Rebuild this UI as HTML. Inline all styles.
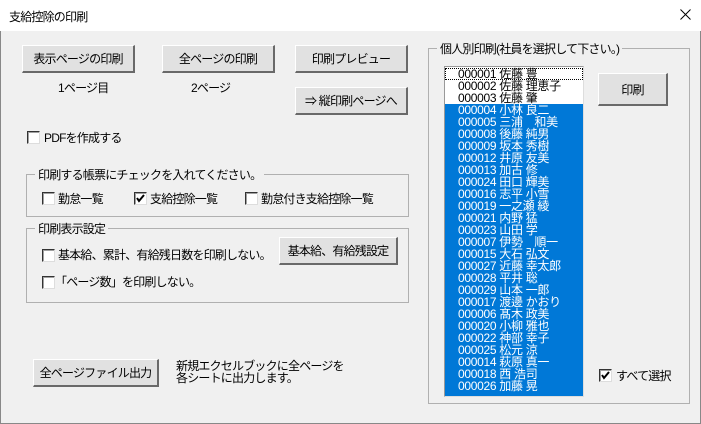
<!DOCTYPE html>
<html><head><meta charset="utf-8"><style>
*{margin:0;padding:0;box-sizing:border-box}
body{width:701px;height:424px;background:#f0f0f0;font-family:"Liberation Sans","Noto Sans CJK JP",sans-serif;font-size:12px;color:#000;position:relative;overflow:hidden;letter-spacing:-0.8px}
.a{position:absolute;white-space:nowrap}
.title{left:0;top:0;width:701px;height:31px;background:#fff}
.btn{position:absolute;background:#e1e1e1;border:1px solid #adadad;border-right:2px solid #696969;border-bottom:2px solid #696969;border-top-color:#fff;border-left-color:#fff;text-align:center;font-size:12px;display:flex;align-items:center;justify-content:center}
.cb{position:absolute;width:13px;height:13px;background:#fff;border:1px solid #333;border-right-color:#ddd;border-bottom-color:#ddd;box-shadow:inset 1px 1px 0 #a0a0a0}
.cb svg{position:absolute;left:1px;top:1px}
.grp{position:absolute;border:1px solid #b0b0b0}
.lg{position:absolute;background:#f0f0f0;padding:0 3px;top:-9px;left:8px;font-size:12px}
.list{position:absolute;left:444px;top:66px;width:140px;height:331px;background:#fff;border:1px solid #999;border-right-color:#ddd;border-bottom-color:#ddd;overflow:hidden;padding-top:1px}
.it{height:12px;line-height:12px;font-size:12px;padding-left:13px;letter-spacing:-0.3px}
.s{background:#0078d7;color:#fff}
</style></head><body>
<div class="a title"></div>
<div class="a" style="left:9px;top:8px;font-size:12px">支給控除の印刷</div>
<svg class="a" style="left:680px;top:9px" width="11" height="11"><path d="M0.5 0.5L10.5 10.5M10.5 0.5L0.5 10.5" stroke="#000" stroke-width="1"/></svg>
<div class="a" style="left:0;top:31px;width:1px;height:393px;background:#888"></div>
<div class="a" style="left:700px;top:31px;width:1px;height:393px;background:#888"></div>
<div class="a" style="left:0;top:423px;width:701px;height:1px;background:#888"></div>

<div class="btn" style="left:22px;top:45px;width:113px;height:28px">表示ページの印刷</div>
<div class="btn" style="left:162px;top:45px;width:113px;height:28px">全ページの印刷</div>
<div class="btn" style="left:295px;top:45px;width:113px;height:28px">印刷プレビュー</div>
<div class="btn" style="left:295px;top:87px;width:113px;height:28px">⇒ 縦印刷ページへ</div>
<div class="a" style="left:58px;top:79px">1ページ目</div>
<div class="a" style="left:191px;top:79px">2ページ</div>

<div class="cb" style="left:27px;top:131px"></div>
<div class="a" style="left:44px;top:129px">PDFを作成する</div>

<div class="grp" style="left:26px;top:174px;width:383px;height:43px"><div class="lg">印刷する帳票にチェックを入れてください。</div></div>
<div class="cb" style="left:42px;top:192px"></div><div class="a" style="left:58px;top:190px">勤怠一覧</div>
<div class="cb" style="left:134px;top:192px"><svg width="9" height="9"><path d="M1 4L3 7L8 1" stroke="#000" stroke-width="2" fill="none"/></svg></div><div class="a" style="left:150px;top:190px">支給控除一覧</div>
<div class="cb" style="left:245px;top:192px"></div><div class="a" style="left:261px;top:190px">勤怠付き支給控除一覧</div>

<div class="grp" style="left:26px;top:228px;width:383px;height:75px"><div class="lg">印刷表示設定</div></div>
<div class="cb" style="left:42px;top:249px"></div><div class="a" style="left:58px;top:246px">基本給、累計、有給残日数を印刷しない。</div>
<div class="btn" style="left:279px;top:237px;width:119px;height:28px">基本給、有給残設定</div>
<div class="cb" style="left:42px;top:276px"></div><div class="a" style="left:55px;top:273px">「ページ数」を印刷しない。</div>

<div class="btn" style="left:33px;top:359px;width:126px;height:28px">全ページファイル出力</div>
<div class="a" style="left:176px;top:360px;line-height:12px">新規エクセルブックに全ページを<br>各シートに出力します。</div>

<div class="grp" style="left:428px;top:48px;width:262px;height:356px"><div class="lg">個人別印刷(社員を選択して下さい。)</div></div>
<div class="list">
<div class="it" style="outline:1px dotted #000;outline-offset:-1px">000001 佐藤 豊</div>
<div class="it">000002 佐藤 理恵子</div>
<div class="it">000003 佐藤 肇</div>
<div class="it s">000004 小林 良二</div>
<div class="it s">000005 三浦　和美</div>
<div class="it s">000008 後藤 純男</div>
<div class="it s">000009 坂本 秀樹</div>
<div class="it s">000012 井原 友美</div>
<div class="it s">000013 加古 修</div>
<div class="it s">000024 田口 輝美</div>
<div class="it s">000016 志平 小雪</div>
<div class="it s">000019 一之瀬 綾</div>
<div class="it s">000021 内野 猛</div>
<div class="it s">000023 山田 学</div>
<div class="it s">000007 伊勢　順一</div>
<div class="it s">000015 大石 弘文</div>
<div class="it s">000027 近藤 幸太郎</div>
<div class="it s">000028 平井 聡</div>
<div class="it s">000029 山本 一郎</div>
<div class="it s">000017 渡邊 かおり</div>
<div class="it s">000006 髙木 政美</div>
<div class="it s">000020 小柳 雅也</div>
<div class="it s">000022 神部 幸子</div>
<div class="it s">000025 松元 涼</div>
<div class="it s">000014 萩原 真一</div>
<div class="it s">000018 西 浩司</div>
<div class="it s" style="height:19px">000026 加藤 晃</div>
</div>
<div class="btn" style="left:598px;top:73px;width:70px;height:33px">印刷</div>
<div class="cb" style="left:599px;top:369px"><svg width="9" height="9"><path d="M1 4L3 7L8 1" stroke="#000" stroke-width="2" fill="none"/></svg></div>
<div class="a" style="left:616px;top:367px">すべて選択</div>
</body></html>
